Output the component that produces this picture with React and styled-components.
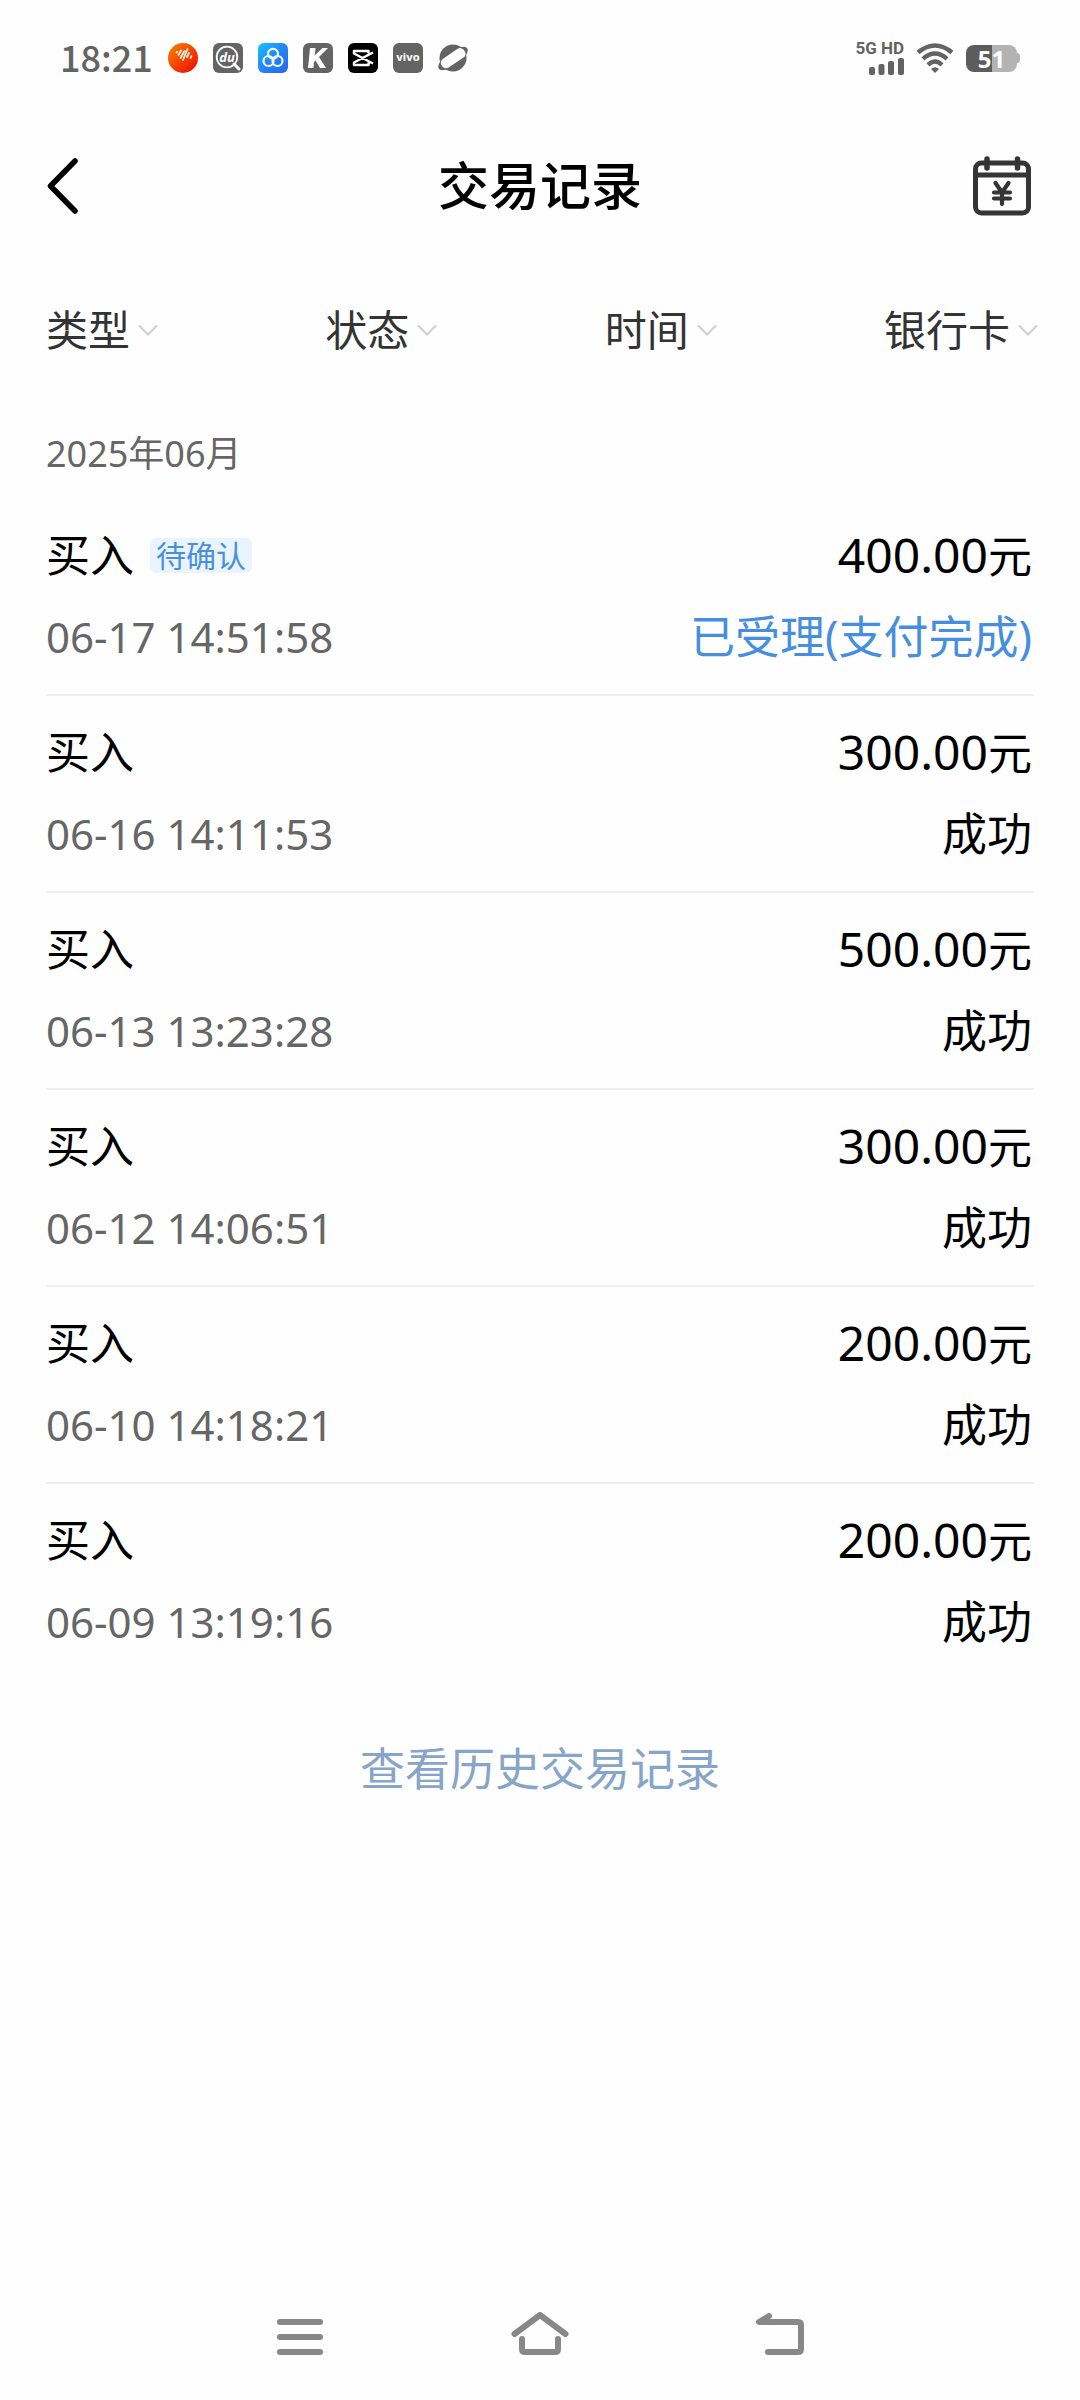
import React from "react";
import styled, { createGlobalStyle } from "styled-components";

const CJK = `"Noto Sans CJK SC", sans-serif`;
const TEXT = `"Noto Sans", "Noto Sans CJK SC", sans-serif`;

const GlobalStyle = createGlobalStyle`
  * { box-sizing: border-box; }
  body {
    margin: 0;
    background: #fefefe;
    color: #000;
    font-family: ${TEXT};
  }
  button {
    margin: 0;
    padding: 0;
    border: 0;
    background: none;
    color: inherit;
    font: inherit;
    cursor: pointer;
  }
  h1, h2, ul { margin: 0; padding: 0; }
  svg { display: block; flex: none; }
`;

const Screen = styled.div`
  display: flex;
  flex-direction: column;
  min-height: 100vh;
`;

const StatusBar = styled.div`
  display: flex;
  align-items: center;
  justify-content: space-between;
  height: 116px;
  padding: 0 60px;
  color: #636363;
`;

const StatusGroup = styled.div`
  display: flex;
  align-items: center;
  gap: ${(p) => p.$gap}px;
`;

const Clock = styled.time`
  padding-bottom: 4px;
  font-family: ${CJK};
  font-size: 36px;
  font-weight: 500;
  line-height: 40px;
`;

const Signal = styled.div`
  display: flex;
  flex-direction: column;
  align-items: flex-end;
  gap: 2px;
  padding-bottom: 2px;
  font-family: Roboto, sans-serif;
  font-size: 17px;
  font-weight: 700;
  line-height: 16px;
`;

const Battery = styled.div`
  display: flex;
  align-items: center;
`;

const BatteryBody = styled.div`
  width: 51px;
  height: 27px;
  border-radius: 8px;
  background: linear-gradient(90deg, #5c5c5c 51%, #b3b3b3 51%);
  color: #fff;
  font-family: "Open Sans", sans-serif;
  font-size: 24px;
  font-weight: 700;
  line-height: 27px;
  text-align: center;
`;

const BatteryTip = styled.div`
  width: 3px;
  height: 10px;
  border-radius: 0 3px 3px 0;
  background: #b3b3b3;
`;

const Header = styled.header`
  display: grid;
  grid-template-columns: 60px 1fr 60px;
  align-items: center;
  height: 140px;
  padding: 0 47px;
`;

const Title = styled.h1`
  padding-bottom: 2px;
  font-size: 51px;
  font-weight: 500;
  line-height: 64px;
  text-align: center;
`;

const Filters = styled.nav`
  display: flex;
  align-items: center;
  justify-content: space-between;
  height: 148px;
  padding: 0 42px 0 46px;
`;

const FilterButton = styled.button`
  display: flex;
  align-items: center;
  gap: 8px;
  color: #333;
  font-size: 42px;
  line-height: 56px;
`;

const Main = styled.main`
  flex: 1;
  padding: 0 46px;
`;

const Month = styled.h2`
  padding: 22px 0 17px;
  color: #666;
  font-size: 36px;
  font-weight: 400;
  line-height: 56px;
`;

const Records = styled.ul`
  list-style: none;
`;

const Record = styled.li`
  display: grid;
  gap: 18px;
  padding: 24px 0 25px;
  border-bottom: 2px solid #eee;
  &:last-child { border-bottom-color: transparent; }
`;

const Line = styled.div`
  display: flex;
  align-items: center;
  justify-content: space-between;
  height: 64px;
  padding-right: 2px;
  font-size: 44px;
  line-height: 64px;
`;

const Kind = styled.span`
  display: flex;
  align-items: center;
  gap: 16px;
`;

const Badge = styled.span`
  padding: 0 6px;
  border-radius: 6px;
  background: #eaf4fe;
  color: #4a8fdc;
  font-size: 30px;
  line-height: 35px;
`;

const Amount = styled.span`
  display: flex;
  align-items: baseline;
`;

const Figure = styled.span`
  font-size: 48px;
`;

const Stamp = styled.time`
  color: #666;
  font-size: 42px;
`;

const State = styled.span`
  color: ${(p) => (p.$pending ? "#468fe0" : "#000")};
  font-size: 45px;
`;

const History = styled.a`
  display: block;
  width: fit-content;
  margin: 56px auto;
  color: #86a5c8;
  font-size: 45px;
  line-height: 64px;
  text-decoration: none;
`;

const SystemNav = styled.nav`
  display: grid;
  grid-template-columns: repeat(3, 240px);
  justify-content: center;
  height: 126px;
`;

const NavButton = styled.button`
  display: grid;
  place-items: center;
`;

const AudioApp = () => (
  <svg width="30" height="30" viewBox="0 0 30 30">
    <defs>
      <linearGradient id="audio" x1="0" y1="0" x2="1" y2="1">
        <stop offset="0" stopColor="#fb8500" />
        <stop offset="1" stopColor="#ed0500" />
      </linearGradient>
    </defs>
    <circle cx="15" cy="15" r="15" fill="url(#audio)" />
    <path d="M8.5 9.5l.5-.8M10.500 12l2.500-4.500M12.500 15l4-7M15 17l4.500-11M19 14l2-4M22.500 15l1-2" stroke="#fff3e6" strokeWidth="1.800" strokeLinecap="round" />
  </svg>
);

const SearchApp = () => (
  <svg width="30" height="30" viewBox="0 0 30 30">
    <rect width="30" height="30" rx="6" fill="#646464" />
    <circle cx="14" cy="14" r="10.300" fill="none" stroke="#fff" strokeWidth="1.800" />
    <path d="M21 21l5 5" stroke="#fff" strokeWidth="3" strokeLinecap="round" />
    <text x="14" y="18.500" textAnchor="middle" fill="#fff" fontFamily="Open Sans, sans-serif" fontSize="13" fontWeight="700" fontStyle="italic">du</text>
  </svg>
);

const CloudApp = () => (
  <svg width="30" height="30" viewBox="0 0 30 30">
    <defs>
      <linearGradient id="cloud" x1="0" y1="0" x2="1" y2="1">
        <stop offset="0" stopColor="#15c4ff" />
        <stop offset=".5" stopColor="#2585f8" />
        <stop offset="1" stopColor="#2468f0" />
      </linearGradient>
    </defs>
    <rect width="30" height="30" rx="6" fill="url(#cloud)" />
    <g fill="none" stroke="#f0fcff" strokeWidth="2.200">
      <circle cx="15" cy="10.800" r="5" />
      <circle cx="10.500" cy="18" r="5" />
      <circle cx="19.500" cy="18" r="5" />
    </g>
    <path d="M13 14h5l-2.500 4z" fill="#f0fcff" />
  </svg>
);

const KApp = () => (
  <svg width="30" height="30" viewBox="0 0 30 30">
    <rect width="30" height="30" rx="6" fill="#646464" />
    <path d="M7 5h5.500l-.8 7.500L19.500 5H25l-9 9 7 11h-6l-4.500-7.500-1.500 1.500-.6 6H5z" fill="#fff" />
  </svg>
);

const CutApp = () => (
  <svg width="30" height="30" viewBox="0 0 30 30">
    <rect width="30" height="30" rx="6" fill="#000" />
    <path d="M25 9.500L6 19.500V22h14.500v-2.500M25 20.500L6 10.500V8h14.500v2.500" fill="none" stroke="#fff" strokeWidth="2.400" strokeLinejoin="round" />
  </svg>
);

const VivoApp = () => (
  <svg width="30" height="30" viewBox="0 0 30 30">
    <rect width="30" height="30" rx="6" fill="#646464" />
    <text x="15" y="18" textAnchor="middle" fill="#fff" fontFamily="DejaVu Sans, sans-serif" fontSize="10" fontWeight="700">vivo</text>
  </svg>
);

const PlanetApp = () => (
  <svg width="30" height="30" viewBox="0 0 30 30">
    <circle cx="15" cy="15" r="13.500" fill="#646464" />
    <ellipse cx="15" cy="15.500" rx="17.500" ry="7" transform="rotate(-36 15 15.500)" fill="#646464" />
    <rect x="1.500" y="10" width="27" height="10.500" rx="4.500" transform="rotate(-34 15 15)" fill="#fefefe" />
  </svg>
);

const SignalBars = () => (
  <svg width="35" height="17" viewBox="0 0 35 17" fill="currentColor">
    <rect x="0" y="9" width="6" height="8" rx="2" />
    <rect x="9.500" y="6" width="6" height="11" rx="2" />
    <rect x="19" y="3" width="6" height="14" rx="2" />
    <rect x="29" y="0" width="6" height="17" rx="2" />
  </svg>
);

const Wifi = () => (
  <svg width="38" height="30" viewBox="0 0 38 30">
    <g fill="none" stroke="currentColor" strokeWidth="4.400">
      <path d="M2 9.500Q19-4.500 36 9.500" />
      <path d="M7 15.800Q19 5.300 31 15.800" />
      <path d="M12 21.800Q19 15.300 26 21.800" />
    </g>
    <path d="M15 26q4-3.500 8 0l-4 4z" fill="currentColor" />
  </svg>
);

const BackArrow = () => (
  <svg width="34" height="60" viewBox="0 0 34 60">
    <path d="M28 5L3.500 30L28 55" fill="none" stroke="#000" strokeWidth="5.500" strokeLinecap="round" strokeLinejoin="round" />
  </svg>
);

const Calendar = () => (
  <svg width="60" height="64" viewBox="0 0 60 64" fill="none" stroke="#353535" strokeWidth="5" strokeLinecap="round" strokeLinejoin="round">
    <rect x="2.500" y="9" width="53" height="50" rx="6" />
    <path d="M3 21h52" />
    <path d="M14 5v9M44.500 5v9" strokeWidth="5.500" />
    <path d="M22.500 29l6.500 9.500L35.500 29M29 38.500V50M21 38.500h16M21 44.500h16" strokeWidth="4.200" />
  </svg>
);

const Chevron = () => (
  <svg width="20" height="12" viewBox="0 0 20 12">
    <path d="M1 1.500l9 9l9-9" fill="none" stroke="#d0d0d0" strokeWidth="2" />
  </svg>
);

const NavIcon = ({ children }) => (
  <svg width="60" height="50" viewBox="0 0 60 50" fill="none" stroke="#888" strokeWidth="6" strokeLinecap="round" strokeLinejoin="round">
    {children}
  </svg>
);

const FILTERS = ["类型", "状态", "时间", "银行卡"];

const RECORDS = [
  { time: "06-17 14:51:58", amount: "400.00", state: "已受理(支付完成)", badge: "待确认" },
  { time: "06-16 14:11:53", amount: "300.00", state: "成功" },
  { time: "06-13 13:23:28", amount: "500.00", state: "成功" },
  { time: "06-12 14:06:51", amount: "300.00", state: "成功" },
  { time: "06-10 14:18:21", amount: "200.00", state: "成功" },
  { time: "06-09 13:19:16", amount: "200.00", state: "成功" },
];

export default function App() {
  return (
    <Screen>
      <GlobalStyle />
      <StatusBar>
        <StatusGroup $gap={15}>
          <Clock>18:21</Clock>
          <AudioApp />
          <SearchApp />
          <CloudApp />
          <KApp />
          <CutApp />
          <VivoApp />
          <PlanetApp />
        </StatusGroup>
        <StatusGroup $gap={12}>
          <Signal>
            <span>5G HD</span>
            <SignalBars />
          </Signal>
          <Wifi />
          <Battery>
            <BatteryBody>51</BatteryBody>
            <BatteryTip />
          </Battery>
        </StatusGroup>
      </StatusBar>

      <Header>
        <button type="button" aria-label="返回"><BackArrow /></button>
        <Title>交易记录</Title>
        <button type="button" aria-label="交易日历"><Calendar /></button>
      </Header>

      <Filters aria-label="筛选">
        {FILTERS.map((name) => (
          <FilterButton key={name} type="button" aria-haspopup="listbox">
            {name}
            <Chevron />
          </FilterButton>
        ))}
      </Filters>

      <Main>
        <Month>2025年06月</Month>
        <Records>
          {RECORDS.map((r) => (
            <Record key={r.time}>
              <Line>
                <Kind>
                  买入
                  {r.badge && <Badge>{r.badge}</Badge>}
                </Kind>
                <Amount><Figure>{r.amount}</Figure>元</Amount>
              </Line>
              <Line>
                <Stamp>{r.time}</Stamp>
                <State $pending={Boolean(r.badge)}>{r.state}</State>
              </Line>
            </Record>
          ))}
        </Records>
        <History href="#history">查看历史交易记录</History>
      </Main>

      <SystemNav aria-label="系统导航">
        <NavButton type="button" aria-label="最近任务">
          <NavIcon><path d="M10 10h40M10 25h40M10 40h40" /></NavIcon>
        </NavButton>
        <NavButton type="button" aria-label="主屏幕">
          <NavIcon>
            <path d="M4.500 22L30 3L55.500 22" />
            <path d="M12 27v10q0 3 3 3h30q3 0 3-3V27" />
          </NavIcon>
        </NavButton>
        <NavButton type="button" aria-label="返回上一页">
          <NavIcon>
            <path d="M19 4L9 10H48q3 0 3 3v24q0 3-3 3H18" />
            <path d="M19 4L9 10h8z" fill="#888" strokeWidth="3" />
          </NavIcon>
        </NavButton>
      </SystemNav>
    </Screen>
  );
}
